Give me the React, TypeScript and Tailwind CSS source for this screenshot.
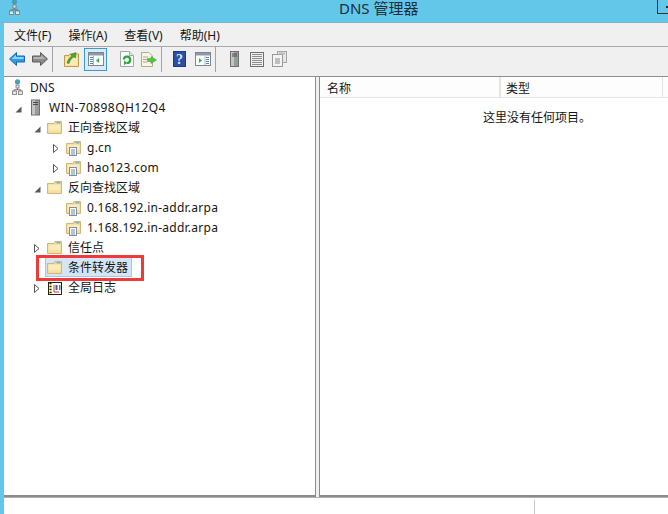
const font = { fontFamily: '"Noto Sans", "Noto Sans CJK SC", sans-serif' };

function Back() {
  return (
    <svg width="16" height="14" viewBox="0 0 16 14">
      <path d="M7.5 0.5 L0.5 7 L7.5 13.5 V10 H15.5 V4 H7.5 Z" fill="#2f9be8" stroke="#1668b8" />
      <path d="M7 3 L2.5 7 H14.5 V5 H7 Z" fill="#8fd3fa" />
    </svg>
  );
}

function Forward() {
  return (
    <svg width="16" height="14" viewBox="0 0 16 14">
      <path d="M8.5 0.5 L15.5 7 L8.5 13.5 V10 H0.5 V4 H8.5 Z" fill="#8a8a8a" stroke="#5c5c5c" />
      <path d="M1.5 5 H9 V3 L13 7 H1.5 Z" fill="#b5b5b5" />
    </svg>
  );
}

function FolderUp() {
  return (
    <svg width="15" height="16" viewBox="0 0 15 16">
      <path d="M0.5 4.5 H5 L6 3 H14.5 V15.5 H0.5 Z" fill="#f7dc95" stroke="#c79a4a" />
      <path d="M1.5 6.5 H13.5 V14.5 H1.5 Z" fill="#fbe9b7" />
      <path d="M3 12 C4 8 6 6 8 5 L6.5 3.5 L12 1.5 L11.5 7 L10 5.8 C8 7 6 9 5 12.5 Z" fill="#43a82f" stroke="#2a7d1b" strokeWidth="0.5" />
    </svg>
  );
}

function PaneWindow({ green = 'left' }: { green?: 'left' | 'right' }) {
  return (
    <svg width="16" height="14" viewBox="0 0 16 14">
      <rect x="0.5" y="0.5" width="15" height="13" fill="#fff" stroke="#7b8794" />
      <rect x="1" y="1" width="14" height="2.5" fill="#8e99a5" />
      {green === 'left' ? (
        <>
          <path d="M2 5.5 H5 M2 7.5 H5 M2 9.5 H5 M2 11.5 H5" stroke="#5d87b3" />
          <path d="M5.5 4 V13" stroke="#aab4be" />
          <path d="M11 6 L8 8.5 L11 11 Z" fill="#2bb24c" />
        </>
      ) : (
        <>
          <path d="M11 5.5 H14 M11 7.5 H14 M11 9.5 H14 M11 11.5 H14" stroke="#5d87b3" />
          <path d="M10 4 V13" stroke="#aab4be" />
          <path d="M4 6 L7 8.5 L4 11 Z" fill="#2bb24c" />
        </>
      )}
    </svg>
  );
}

function Refresh() {
  return (
    <svg width="14" height="16" viewBox="0 0 14 16">
      <path d="M0.5 0.5 H9.5 L13.5 4.5 V15.5 H0.5 Z" fill="#fafafa" stroke="#a6a6a6" />
      <path d="M9.5 0.5 V4.5 H13.5" fill="#e4e4e4" stroke="#a6a6a6" />
      <path d="M3.8 8.5 A3.2 3.2 0 1 1 7 12" fill="none" stroke="#2aa63a" strokeWidth="2.2" />
      <path d="M4 14 L7.5 12 L4 9.5 Z" fill="#2aa63a" />
    </svg>
  );
}

function Export() {
  return (
    <svg width="16" height="15" viewBox="0 0 16 15">
      <path d="M0.5 0.5 H8 L11.5 4 V14.5 H0.5 Z" fill="#fbf6e3" stroke="#b3ab93" />
      <path d="M2.5 5 H7 M2.5 7.5 H6 M2.5 10 H6" stroke="#555" strokeDasharray="1 1" />
      <path d="M10 4.5 L15.5 8 L10 11.5 V9.5 H6.5 V6.5 H10 Z" fill="#56c246" stroke="#3b9a2e" strokeWidth="0.5" />
    </svg>
  );
}

function Help() {
  return (
    <svg width="13" height="16" viewBox="0 0 13 16">
      <rect width="13" height="16" fill="#2c4fa3" />
      <rect x="0.5" y="0.5" width="12" height="15" fill="none" stroke="#1c3a86" />
      <text x="6.5" y="13" textAnchor="middle" fontSize="14" fontWeight="700" fill="#dfe6f5" fontFamily="Liberation Serif, serif">?</text>
    </svg>
  );
}

function Server({ w = 9, h = 16 }: { w?: number; h?: number }) {
  return (
    <svg width={w} height={h} viewBox="0 0 9 16">
      <rect x="0.5" y="0.5" width="8" height="15" fill="#9b9b9b" stroke="#6f6f6f" />
      <rect x="1" y="1" width="3" height="14" fill="#c4c4c4" />
      <path d="M2 3 H7 M2 5 H7" stroke="#4d4d4d" />
      <rect x="6" y="12" width="1.5" height="1.5" fill="#5fc54d" />
    </svg>
  );
}

function ListIcon() {
  return (
    <svg width="14" height="15" viewBox="0 0 14 15">
      <rect x="0.5" y="0.5" width="13" height="14" fill="#f0f0f0" stroke="#6e6e6e" />
      <path d="M2 2.5 H12 M2 4.5 H12 M2 6.5 H12 M2 8.5 H12 M2 10.5 H12 M2 12.5 H12" stroke="#8c8c8c" />
    </svg>
  );
}

function CopyIcon() {
  return (
    <svg width="15" height="16" viewBox="0 0 15 16">
      <rect x="5.5" y="0.5" width="9" height="11" fill="#e6e6e6" stroke="#a5a5a5" />
      <rect x="0.5" y="3.5" width="10" height="12" fill="#f3f3f3" stroke="#9a9a9a" />
      <path d="M3 8 H8 M3 10 H8 M3 12 H8" stroke="#8a8a8a" />
      <rect x="7" y="1.5" width="6" height="2" fill="#bdbdbd" />
    </svg>
  );
}

function Sep() {
  return <div className="w-px h-[25px] bg-[#a3a3a3]" />;
}

function Dns() {
  return (
    <svg width="11" height="16" viewBox="0 0 11 16">
      <circle cx="5.5" cy="2.8" r="2.6" fill="#3f9ad6" />
      <path d="M4 1.2 L6.8 2.2 L5 4.6 Z" fill="#55b44a" />
      <rect x="4" y="6" width="3" height="3" fill="#e8e8e8" stroke="#777" strokeWidth="0.8" />
      <path d="M5.5 9 V11 M2 12 V10.8 H9 V12" stroke="#777" fill="none" />
      <rect x="0.5" y="12" width="4" height="3.5" fill="#e8e8e8" stroke="#777" strokeWidth="0.8" />
      <rect x="6.5" y="12" width="4" height="3.5" fill="#e8e8e8" stroke="#777" strokeWidth="0.8" />
    </svg>
  );
}

function FolderBody() {
  return (
    <>
      <path d="M0.5 2.5 V12.5 H14.5 V0.5 H8 L7 2.5 Z" fill="#f3d88f" stroke="#d0b77c" />
      <rect x="1.5" y="3.5" width="12" height="6" fill="#fcecbc" />
      <rect x="1.5" y="9.5" width="12" height="2" fill="#f8e1a0" />
      <rect x="9.5" y="1" width="4" height="1.5" fill="#6fb7e6" />
    </>
  );
}

function Folder() {
  return (
    <svg width="15" height="13" viewBox="0 0 15 13">
      <FolderBody />
    </svg>
  );
}

function ZoneFolder() {
  return (
    <svg className="mt-[2px]" width="15" height="15" viewBox="0 0 15 15">
      <FolderBody />
      <rect x="3.5" y="6.5" width="7" height="8" fill="#fff" stroke="#7d8fa5" />
      <path d="M5 9 H9 M5 11 H9 M5 13 H9" stroke="#6e8cad" />
    </svg>
  );
}

function LogIcon() {
  return (
    <svg className="mt-[3px]" width="14" height="13" viewBox="0 0 14 13">
      <rect x="0.5" y="0.5" width="13" height="12" fill="#fff" stroke="#222" />
      <path d="M2.5 1 V12" stroke="#e8c83a" strokeWidth="2" />
      <path d="M2.5 1 V12" stroke="#222" strokeWidth="2" strokeDasharray="1 2" />
      <path d="M6 3 V10 H11" fill="none" stroke="#d33" />
      <path d="M8.5 3 V8" stroke="#2c5fc9" strokeWidth="2" />
      <rect x="11" y="3" width="1.5" height="5" fill="#2f9d4a" />
    </svg>
  );
}

// expander triangles of the tree
function Open() {
  return (
    <svg className="mt-[4px]" width="7" height="7" viewBox="0 0 7 7">
      <path d="M6.5 0.5 V6.5 H0.5 Z" fill="#595959" />
    </svg>
  );
}

function Closed() {
  return (
    <svg className="mt-[2px]" width="6" height="9" viewBox="0 0 6 9">
      <path d="M0.5 0.5 L5 4.5 L0.5 8.5 Z" fill="#fff" stroke="#555" />
    </svg>
  );
}

function Row({ indent, toggle, icon, label, latin }: { indent: string; toggle?: 'open' | 'closed'; icon: React.ReactNode; label: string; latin?: string }) {
  return (
    <div className={`flex items-center h-5 ${indent}`}>
      <div className="w-[10px] flex justify-center items-center">
        {toggle === 'open' && <Open />}
        {toggle === 'closed' && <Closed />}
      </div>
      <div className="ml-[5px] w-[15px] flex justify-center items-center">{icon}</div>
      <span className={`ml-[6px] pt-[2px] whitespace-nowrap ${latin ?? ''}`}>{label}</span>
    </div>
  );
}

export default function App() {
  return (
    <div style={font} className="relative w-[668px] h-[514px] overflow-hidden bg-[#63c7ea] text-[12px] text-[#151515] flex flex-col">
      {/* Title bar */}
      <div className="relative h-[23px] pl-[339px] border-b border-[#7fb4cc] shrink-0">
        <span className="block text-[15px] leading-[16px] text-[#1e2d3a] whitespace-nowrap">DNS 管理器</span>
        <div className="absolute left-[9px] top-[-1px]">
          <Dns />
        </div>
        <div className="absolute right-0 top-0 w-[11px] h-[14px] border-l border-b border-[#333] flex items-center justify-end">
          <div className="w-[2px] h-[2px] bg-[#222]" />
        </div>
      </div>

      <div className="flex-1 ml-[4px] bg-[#f0f0f0] flex flex-col min-h-0">
        {/* Menu */}
        <div className="h-[24px] shrink-0 flex items-center gap-[17px] pl-[10px] pt-[2px] border-b border-[#a8a8a8]">
          <span>文件(F)</span>
          <span>操作(A)</span>
          <span>查看(V)</span>
          <span>帮助(H)</span>
        </div>

        {/* Toolbar */}
        <div className="h-[30px] shrink-0 flex items-center pl-[5px] pb-[5px] border-b border-[#8f8f8f]">
          <Back />
          <div className="ml-[7px]"><Forward /></div>
          <div className="ml-[4px]"><Sep /></div>
          <div className="ml-[11px]"><FolderUp /></div>
          <div className="ml-[5px] w-[23px] h-[23px] flex items-center justify-center bg-[#dceaf5] border border-[#3a9bd4]">
            <PaneWindow />
          </div>
          <div className="ml-[13px]"><Refresh /></div>
          <div className="ml-[7px]"><Export /></div>
          <div className="ml-[4px]"><Sep /></div>
          <div className="ml-[11px]"><Help /></div>
          <div className="ml-[9px]"><PaneWindow green="right" /></div>
          <div className="ml-[4px]"><Sep /></div>
          <div className="ml-[14px]"><Server /></div>
          <div className="ml-[11px]"><ListIcon /></div>
          <div className="ml-[8px]"><CopyIcon /></div>
        </div>

        {/* Panes */}
        <div className="h-[420px] shrink-0 flex gap-[3px]">
          <div className="w-[312px] bg-white border-r border-b-2 border-[#8a8a94]">
            <div className="flex items-center h-5 pl-[8px]">
              <Dns />
              <span className="ml-[7px] pt-[2px]">DNS</span>
            </div>
            <Row indent="pl-[9px]" toggle="open" icon={<Server w={9} h={17} />} label="WIN-70898QH12Q4" latin="tracking-[0.4px]" />
            <Row indent="pl-[28px]" toggle="open" icon={<Folder />} label="正向查找区域" />
            <Row indent="pl-[47px]" toggle="closed" icon={<ZoneFolder />} label="g.cn" latin="tracking-[0.25px]" />
            <Row indent="pl-[47px]" toggle="closed" icon={<ZoneFolder />} label="hao123.com" latin="tracking-[0.25px]" />
            <Row indent="pl-[28px]" toggle="open" icon={<Folder />} label="反向查找区域" />
            <Row indent="pl-[47px]" icon={<ZoneFolder />} label="0.168.192.in-addr.arpa" latin="tracking-[0.25px]" />
            <Row indent="pl-[47px]" icon={<ZoneFolder />} label="1.168.192.in-addr.arpa" latin="tracking-[0.25px]" />
            <Row indent="pl-[28px]" toggle="closed" icon={<Folder />} label="信任点" />
            <div className="flex items-center h-5 pl-[41px]">
              <div className="flex items-center h-[20px] w-[87px] pl-[1px] bg-[#d3e5f6] border border-[#a9c6e3]">
                <Folder />
                <span className="ml-[6px] pt-[2px] whitespace-nowrap">条件转发器</span>
              </div>
            </div>
            <Row indent="pl-[28px]" toggle="closed" icon={<LogIcon />} label="全局日志" />
          </div>

          <div className="flex-1 bg-white border-l border-b-2 border-[#8a8a94]">
            <div className="flex h-[21px] border-b border-[#e5e5e5] bg-[#fdfdfd]">
              <div className="w-[181px] pl-[7px] pt-[4px] flex items-center border-r-2 border-[#e5e5e5]">名称</div>
              <div className="w-[162px] pl-[5px] pt-[4px] flex items-center border-r border-[#e5e5e5]">类型</div>
            </div>
            <div className="pt-[11px] pl-[163px]">这里没有任何项目。</div>
          </div>
        </div>

        {/* Status bar */}
        <div className="flex-1 bg-white border-t border-[#b0b0b0] flex pt-[2px]">
          <div className="w-[531px] border-r border-[#c8c8c8]" />
        </div>
      </div>

      {/* Red annotation */}
      <div className="absolute left-[36px] top-[255px] w-[108px] h-[26px] border-[3px] border-[#f03a3a]" />
    </div>
  );
}
